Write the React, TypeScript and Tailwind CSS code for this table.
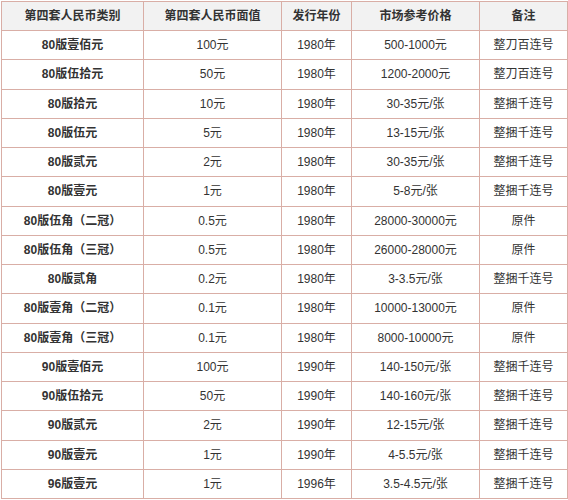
const rows: [string, string, string, string, string][] = [
  ["80版壹佰元", "100元", "1980年", "500-1000元", "整刀百连号"],
  ["80版伍拾元", "50元", "1980年", "1200-2000元", "整刀百连号"],
  ["80版拾元", "10元", "1980年", "30-35元/张", "整捆千连号"],
  ["80版伍元", "5元", "1980年", "13-15元/张", "整捆千连号"],
  ["80版贰元", "2元", "1980年", "30-35元/张", "整捆千连号"],
  ["80版壹元", "1元", "1980年", "5-8元/张", "整捆千连号"],
  ["80版伍角（二冠）", "0.5元", "1980年", "28000-30000元", "原件"],
  ["80版伍角（三冠）", "0.5元", "1980年", "26000-28000元", "原件"],
  ["80版贰角", "0.2元", "1980年", "3-3.5元/张", "整捆千连号"],
  ["80版壹角（二冠）", "0.1元", "1980年", "10000-13000元", "原件"],
  ["80版壹角（三冠）", "0.1元", "1980年", "8000-10000元", "原件"],
  ["90版壹佰元", "100元", "1990年", "140-150元/张", "整捆千连号"],
  ["90版伍拾元", "50元", "1990年", "140-160元/张", "整捆千连号"],
  ["90版贰元", "2元", "1990年", "12-15元/张", "整捆千连号"],
  ["90版壹元", "1元", "1990年", "4-5.5元/张", "整捆千连号"],
  ["96版壹元", "1元", "1996年", "3.5-4.5元/张", "整捆千连号"],
];

const headers = ["第四套人民币类别", "第四套人民币面值", "发行年份", "市场参考价格", "备注"];

export default function App() {
  return (
    <div className="h-[500px] w-[568px] bg-white pl-px pt-px font-['Liberation_Sans','Noto_Sans_CJK_SC',sans-serif] text-[12px] text-[#333]">
      <table className="w-[566px] table-fixed border-collapse">
        <colgroup>
          <col className="w-[142px]" />
          <col className="w-[138px]" />
          <col className="w-[70px]" />
          <col className="w-[128px]" />
          <col className="w-[88px]" />
        </colgroup>
        <thead>
          <tr className="h-[29px] bg-[#f2f2f2]">
            {headers.map((h) => (
              <th key={h} className="border border-[#d9aea6] p-0 text-center font-bold">
                {h}
              </th>
            ))}
          </tr>
        </thead>
        <tbody>
          {rows.map((r) => (
            <tr key={r[0]} className="h-[29.25px]">
              {r.map((c, i) => (
                <td
                  key={i}
                  className={`border border-[#d9aea6] p-0 text-center ${i === 0 ? "font-bold" : "font-normal"}`}
                >
                  {c}
                </td>
              ))}
            </tr>
          ))}
        </tbody>
      </table>
    </div>
  );
}
